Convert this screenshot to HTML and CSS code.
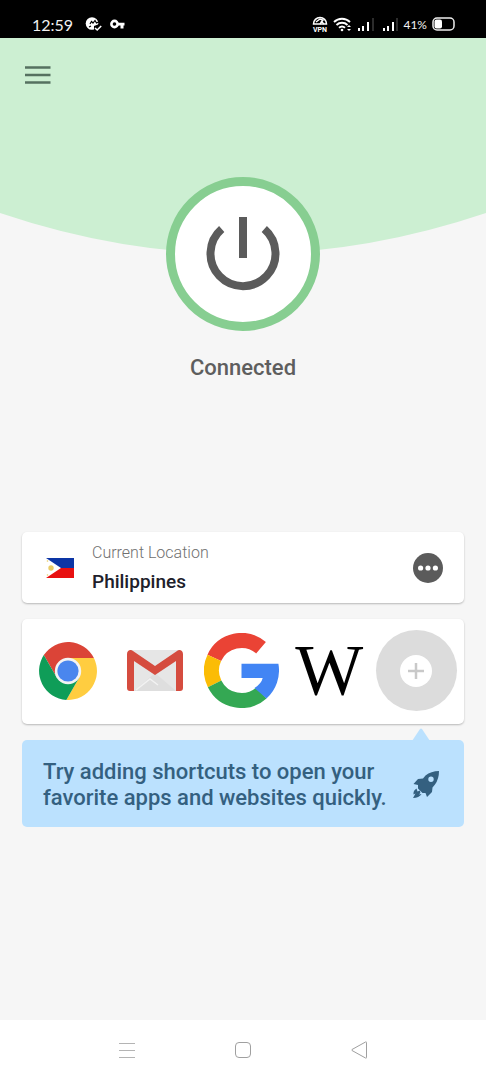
FILE: index.html
```html
<!DOCTYPE html>
<html lang="en">
<head>
<meta charset="utf-8">
<meta name="viewport" content="width=device-width, initial-scale=1">
<title>VPN</title>
<link rel="stylesheet" href="styles.css">
</head>
<body>
<div class="statusbar">
  <div class="status-group status-left">
    <span class="clock">12:59</span>
    <svg width="17" height="16" viewBox="0 0 17 16"><circle cx="7" cy="7.500" r="6.300" fill="#fff"/><path d="M5 8l1.500-2.500L8 7l2-2.500 1.500 2.500 2-1M4 11l2-1" stroke="#000" stroke-width="1.200" fill="none"/><path d="M9 16V10l8-3v9z" fill="#000"/><path d="M10 12l2.200 2 4-4" stroke="#fff" stroke-width="1.600" fill="none"/></svg>
    <svg width="15" height="10" viewBox="0 0 15 10"><circle cx="4.500" cy="5" r="3.100" fill="none" stroke="#fff" stroke-width="2.600"/><path d="M8 3.700h6.500v2.700h-1v3h-3v-3H8z" fill="#fff"/></svg>
  </div>
  <div class="status-group status-right">
    <svg class="vpn" width="16" height="16" viewBox="0 0 16 16"><path d="M1.500 8a6.500 6.500 0 0 1 13 0z" fill="none" stroke="#fff" stroke-width="1.500"/><path d="M4 6l4-3 3 1-3 4M9 5l3 3" fill="none" stroke="#fff" stroke-width="1.400"/><text x="8" y="15.500" text-anchor="middle" class="vpn-text">VPN</text></svg>
    <svg class="wifi" width="19" height="16" viewBox="0 0 19 16"><g fill="none" stroke="#fff" stroke-width="1.900"><path d="M1 6a11.500 11.500 0 0 1 16 0M3.500 9a8 8 0 0 1 11 0M6 11.800a4.500 4.500 0 0 1 6 0"/></g><circle cx="9" cy="14" r="1.300" fill="#fff"/><path d="M14 11l2-2 2 2zM14 13l2 2 2-2z" fill="#fff"/></svg>
    <svg class="signal" width="18" height="14" viewBox="0 0 18 14"><path d="M1 11h2v3H1zM5 9h2v5H5zM10 5h2v9h-2z" fill="#fff"/><path d="M15 1h2v13h-2z" fill="#2c2c2c"/></svg>
    <svg class="signal" width="18" height="14" viewBox="0 0 18 14"><path d="M3 11h2v3H3zM7 9h2v5H7zM12 5h2v9h-2z" fill="#fff"/><path d="M16 1h2v13h-2z" fill="#2c2c2c"/></svg>
    <span class="battery-text">41%</span>
    <svg width="23" height="14" viewBox="0 0 23 14"><rect x="1" y="1" width="21" height="12" rx="4" fill="none" stroke="#eee" stroke-width="1.500"/><rect x="2.500" y="2.500" width="7.500" height="9" rx="2" fill="#fff"/></svg>
  </div>
</div>

<main class="screen">
  <svg class="backdrop" viewBox="0 0 486 216" preserveAspectRatio="none"><path d="M0 0H486V175Q243 257 0 175Z" fill="#ccefd2"/></svg>
  <header class="topbar">
    <button class="icon-button" aria-label="Menu"><svg width="26" height="18" viewBox="0 0 26 18"><path d="M0 1.500h25.500M0 9h25.500M0 16.500h25.500" stroke="#557160" stroke-width="2.600"/></svg></button>
  </header>

  <section class="connection">
    <button class="power" aria-label="Disconnect">
      <svg width="74" height="74" viewBox="0 0 74 74"><g fill="none" stroke="#5b5b5b" stroke-width="8"><path d="M37 0v41"/><path d="M15.700 12.100A32.500 32.500 0 1 0 58.300 12.100"/></g></svg>
    </button>
    <p class="state">Connected</p>
  </section>

  <section class="panels">
    <div class="card location">
      <svg class="flag" width="28" height="20" viewBox="0 0 28 20"><path d="M0 0h28v10H0z" fill="#0c35a5"/><path d="M0 10h28v10H0z" fill="#e81010"/><path d="M0 0l15 10L0 20z" fill="#fff"/><circle cx="5" cy="10" r="2.700" fill="#e9cc67"/><circle cx="1.500" cy="3" r=".8" fill="#e9cc67"/><circle cx="1.500" cy="17" r=".8" fill="#e9cc67"/></svg>
      <div class="place">
        <span class="place-label">Current Location</span>
        <span class="place-name">Philippines</span>
      </div>
      <button class="icon-button" aria-label="Change location"><svg width="30" height="30" viewBox="0 0 30 30"><circle cx="15" cy="15" r="15" fill="#5b5b5b"/><g fill="#fff"><circle cx="7.600" cy="15" r="2.600"/><circle cx="15" cy="15" r="2.600"/><circle cx="22.400" cy="15" r="2.600"/></g></svg></button>
    </div>

    <div class="card shortcuts">
      <button class="icon-button" aria-label="Chrome">
        <svg width="58" height="58" viewBox="-29 -29 58 58"><path d="M0-13H25.900A29 29 0 0 0-24.200-15.900L-11.260 6.500z" fill="#db4437"/><path d="M25.900-13A29 29 0 0 1-1.690 28.930L11.260 6.500 0-13z" fill="#ffcd40"/><path d="M-1.690 28.930A29 29 0 0 1-24.200-15.900L-11.260 6.500 11.260 6.500z" fill="#0f9d58"/><circle r="13.200" fill="#f3f3f3"/><circle r="10.600" fill="#4a86ee"/></svg>
      </button>
      <button class="icon-button" aria-label="Gmail">
        <svg width="56" height="41" viewBox="0 0 56 41"><path d="M3 0h50v41H3z" fill="#e6e6e6"/><path d="M7 41l21-18 21 18z" fill="#dedede"/><path d="M9 40l14-11 8 6" stroke="#f2f2f2" stroke-width="1.500" fill="none"/><path d="M0 4C0 0 4-1 6 1L28 16 50 1c2-2 6-1 6 3v34q0 3-3 3h-4V11L28 25 7 11v30H3q-3 0-3-3z" fill="#d54c3f"/></svg>
      </button>
      <button class="icon-button" aria-label="Google">
        <svg width="75" height="75" viewBox="-37.500 -37.500 75 75"><g fill="none" stroke-width="15"><path d="M19.500-22.800A30 30 0 0 0-27.200-12.700" stroke="#ea4335"/><path d="M-27.200-12.700A30 30 0 0 0-26.900 13.300" stroke="#fbbc05"/><path d="M-26.900 13.300A30 30 0 0 0 20 22.300" stroke="#34a853"/></g><path d="M0-6.700H36.900A37.500 37.500 0 0 1 25 27.900L13 17.500Q20 13 21.200 7.500H0z" fill="#4285f4"/></svg>
      </button>
      <button class="icon-button wiki" aria-label="Wikipedia">W</button>
      <button class="icon-button add" aria-label="Add shortcut"><svg width="32" height="32" viewBox="0 0 32 32"><circle cx="16" cy="16" r="16" fill="#fff"/><path d="M16 8v16M8 16h16" stroke="#c9c9c9" stroke-width="2.500"/></svg></button>
    </div>

    <div class="tip">
      <svg class="tip-arrow" width="18" height="13" viewBox="0 0 18 13"><path d="M0 13L8 1q1-1 2 0l8 12z" fill="#bbe1fe"/></svg>
      <p class="tip-text">Try adding shortcuts to open your favorite apps and websites quickly.</p>
      <svg class="rocket" width="28" height="28" viewBox="0 0 28 28"><path fill="#346080" fill-rule="evenodd" d="M27 0Q27 8 23 13.500L20.500 16.500 20 21 15 26 13.500 22 10.500 22 6 17.500 6 14 1.500 13 6 8 11 7.500 13.500 4.500Q19 0 27 0zM19 5.500a2.700 2.700 0 1 0 0 5.400 2.700 2.700 0 0 0 0-5.400z"/><path fill="#346080" d="M4.500 17.500Q1 19.500 1.500 23.500L3.500 22.500 1 27Q7 27 9.500 23L7 23.500Q9 21.500 8 19.500L5.500 20.500z"/></svg>
    </div>
  </section>
</main>

<nav class="navbar">
  <button class="icon-button" aria-label="Recent apps"><svg width="18" height="18" viewBox="0 0 18 18"><path d="M1 2.500h16M1 9.500h16M1 16.500h16" stroke="#b4b4b4"/></svg></button>
  <button class="icon-button" aria-label="Home"><svg width="18" height="18" viewBox="0 0 18 18"><rect x="1.500" y="1.500" width="15" height="15" rx="3.500" fill="none" stroke="#a0a0a0"/></svg></button>
  <button class="icon-button" aria-label="Back"><svg width="18" height="18" viewBox="0 0 18 18"><path d="M16.500 1.500v15q0 1-1 .5L2 9.500q-1-.5 0-1L15.500 1q1-.5 1 .5z" fill="none" stroke="#a0a0a0"/></svg></button>
</nav>
</body>
</html>
```
FILE: styles.css
```css
* { box-sizing: border-box; }

body {
  margin: 0;
  min-height: 100vh;
  display: flex;
  flex-direction: column;
  background: #f6f6f6;
  font-family: Roboto, "Liberation Sans", sans-serif;
}

p { margin: 0; }
svg { display: block; flex: none; }

.icon-button {
  display: flex;
  align-items: center;
  justify-content: center;
  padding: 0;
  border: 0;
  background: none;
  cursor: pointer;
}

.statusbar {
  display: flex;
  justify-content: space-between;
  height: 38px;
  padding: 10px 31px 0 32px;
  background: #000;
  color: #f2f2f2;
}

.status-group { display: flex; align-items: center; height: 28px; }
.status-left { gap: 8px; }
.status-right { gap: 5px; }
.clock { margin-right: 4px; font-family: Lato, sans-serif; font-size: 16px; }
.battery-text { font-family: Lato, sans-serif; font-size: 12px; }
.vpn-text { font: 700 7px Roboto, sans-serif; fill: #fff; }

.screen { position: relative; flex: 1; }

.backdrop {
  position: absolute;
  top: 0;
  left: 0;
  z-index: -1;
  width: 100%;
  height: 216px;
}

.topbar { display: flex; padding: 28px 25px; }

.connection {
  display: flex;
  flex-direction: column;
  align-items: center;
  gap: 24px;
  padding-top: 65px;
}

.power {
  display: flex;
  align-items: center;
  justify-content: center;
  width: 154px;
  height: 154px;
  padding: 0;
  border: 9px solid #87ce91;
  border-radius: 50%;
  background: #fff;
  cursor: pointer;
}

.state {
  color: #5e5e5e;
  font-size: 22px;
  font-weight: 500;
  line-height: 26px;
}

.panels {
  display: flex;
  flex-direction: column;
  gap: 16px;
  padding: 151px 22px 0;
}

.card {
  border-radius: 5px;
  background: #fff;
  box-shadow: 0 1px 2px #00000040;
}

.location {
  display: flex;
  align-items: center;
  gap: 18px;
  height: 71px;
  padding: 0 21px 0 24px;
}

.place { display: flex; flex: 1; flex-direction: column; gap: 4px; }
.place-label { color: #707070; font-size: 16px; font-weight: 300; line-height: 24px; }
.place-name { color: #20202a; font-size: 19px; font-weight: 500; line-height: 26px; }

.shortcuts {
  display: grid;
  grid-template-columns: repeat(5, 1fr);
  align-items: center;
  justify-items: center;
  height: 105px;
  padding: 0 4px 2px 2px;
}

.wiki {
  padding-bottom: 2px;
  color: #000;
  font-family: "Liberation Serif", serif;
  font-size: 72px;
  line-height: 72px;
}

.add { width: 81px; height: 81px; border-radius: 50%; background: #dcdcdc; }

.tip {
  position: relative;
  display: flex;
  align-items: center;
  justify-content: space-between;
  padding: 19px 24px 16px 21px;
  border-radius: 5px;
  background: #bbe1fe;
  color: #346080;
}

.tip-arrow { position: absolute; right: 34px; bottom: 100%; margin-bottom: -1px; }
.tip-text { max-width: 350px; font-size: 22px; font-weight: 500; line-height: 26px; }

.navbar {
  display: grid;
  grid-template-columns: repeat(3, 116px);
  align-items: center;
  justify-content: center;
  height: 60px;
  background: #fff;
}
```
